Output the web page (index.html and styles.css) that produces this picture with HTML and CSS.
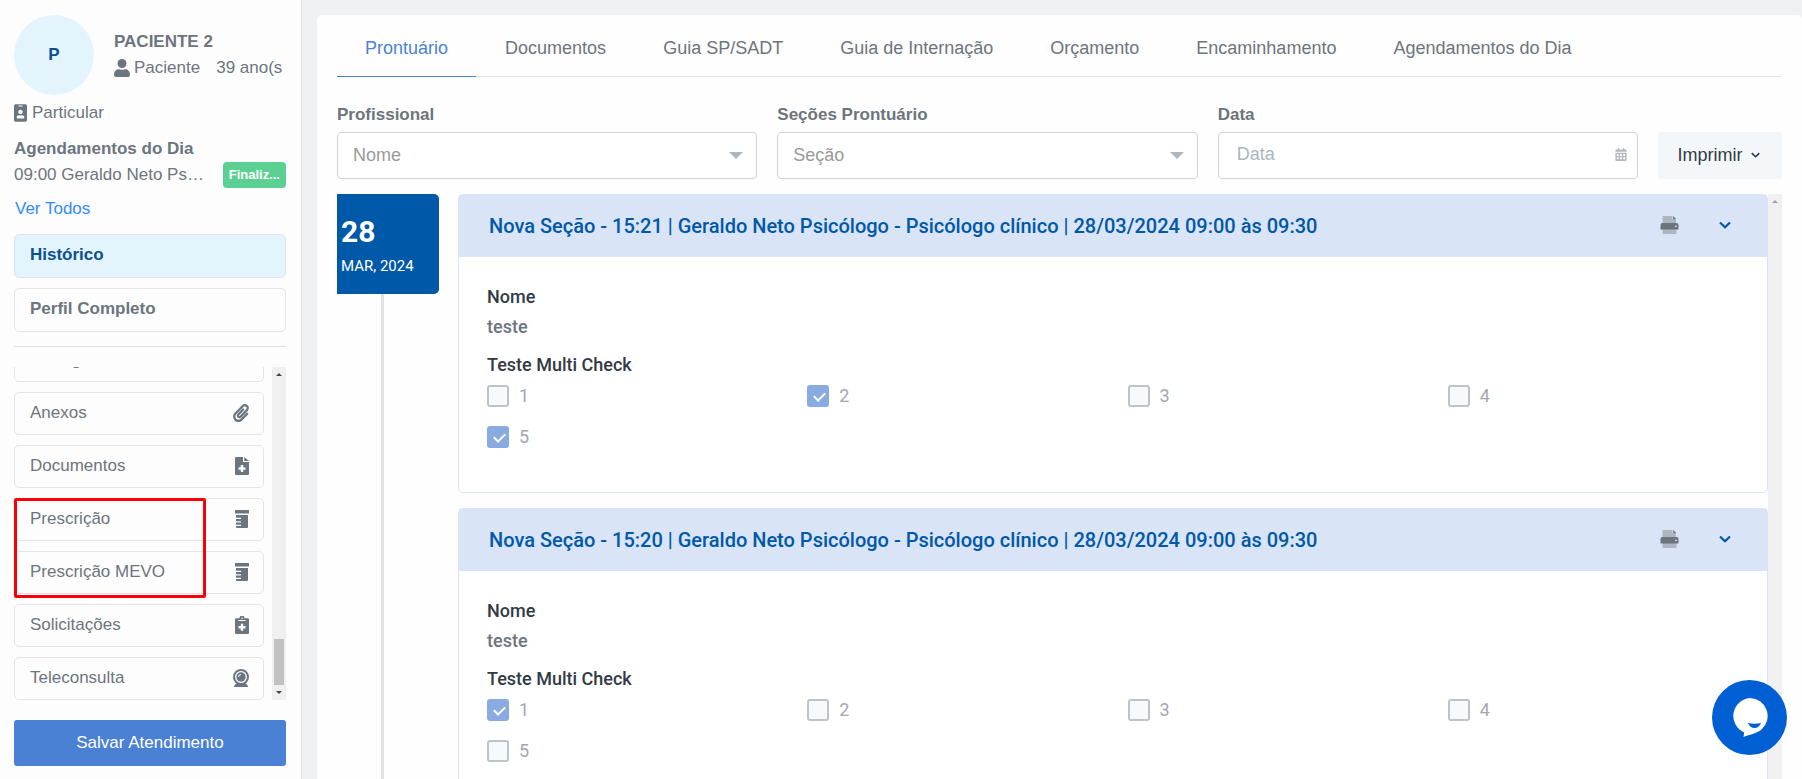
FILE: index.html
```html
<!DOCTYPE html>
<html lang="pt-BR">
<head>
<meta charset="utf-8">
<meta name="viewport" content="width=device-width, initial-scale=1">
<title>Prontuário</title>
<link rel="stylesheet" href="styles.css">
</head>
<body>
<svg class="sprite" aria-hidden="true">
  <symbol id="user" viewBox="0 0 448 512"><circle cx="224" cy="128" r="128"/><path d="M313.600 288h-16.700c-22.200 10.200-46.900 16-72.900 16s-50.600-5.800-72.900-16h-16.700C60.200 288 0 348.200 0 422.400V464c0 26.500 21.500 48 48 48h352c26.500 0 48-21.500 48-48v-41.600c0-74.200-60.200-134.400-134.400-134.400z"/></symbol>
  <symbol id="badge" viewBox="0 0 384 512"><path fill-rule="evenodd" d="M336 0H48C21.500 0 0 21.500 0 48v416c0 26.500 21.500 48 48 48h288c26.500 0 48-21.500 48-48V48c0-26.500-21.500-48-48-48zM144 32h96c8.800 0 16 7.200 16 16s-7.200 16-16 16h-96c-8.800 0-16-7.200-16-16s7.200-16 16-16zm48 128c35.300 0 64 28.700 64 64s-28.700 64-64 64-64-28.700-64-64 28.700-64 64-64zm112 236.800c0 10.600-10 19.200-22.400 19.200H102.400C90 416 80 407.400 80 396.800v-19.200c0-31.800 30.100-57.600 67.200-57.600h5c12.300 5.100 25.700 8 39.800 8s27.600-2.900 39.800-8h5c37.100 0 67.200 25.800 67.200 57.600v19.200z"/></symbol>
  <symbol id="clip" viewBox="0 0 448 512"><path d="M43.246 466.142c-58.430-60.289-57.341-157.511 1.386-217.581L254.392 34c44.316-45.332 116.351-45.336 160.671 0 43.890 44.894 43.943 117.329 0 162.276L232.214 383.128c-29.855 30.537-78.633 30.111-107.982-.998-28.275-29.970-27.368-77.473 1.452-106.953l143.743-146.835c6.182-6.314 16.312-6.422 22.626-.241l22.861 22.379c6.315 6.182 6.422 16.312.241 22.626L171.427 319.927c-4.932 5.045-5.236 13.428-.648 18.292 4.372 4.634 11.245 4.711 15.688.165l182.849-186.851c19.613-20.062 19.613-52.725-.011-72.798-19.189-19.627-49.957-19.637-69.154 0L90.390 293.295c-34.763 35.560-35.299 93.120-1.191 128.313 34.010 35.093 88.985 35.137 123.058.286l172.060-175.999c6.177-6.319 16.307-6.433 22.626-.256l22.877 22.364c6.319 6.177 6.434 16.307.256 22.626l-172.060 175.998c-59.576 60.938-155.943 60.216-214.770-.485z"/></symbol>
  <symbol id="file" viewBox="0 0 14 18"><path fill-rule="evenodd" d="M1 0h7v5h6v12a1 1 0 0 1-1 1H1a1 1 0 0 1-1-1V1a1 1 0 0 1 1-1zM5.800 8v2.300H3.500v2.400h2.300V15h2.400v-2.300h2.300v-2.400H8.200V8zM9.200 0l4.800 4H9.200z"/></symbol>
  <symbol id="bottle" viewBox="0 0 14 18"><path d="M.5 0h13a.5.500 0 0 1 .5.500v2.500a.5.500 0 0 1-.5.500H.5A.5.500 0 0 1 0 3V.5A.5.500 0 0 1 .5 0zM1 5h12v12a1 1 0 0 1-1 1H2a1 1 0 0 1-1-1v-1h5v-1.200H1v-2.300h5v-1.200H1V9h5V7.800H1z"/></symbol>
  <symbol id="clipboard" viewBox="0 0 14 18"><path fill-rule="evenodd" d="M1.300 2.200H4.500a2.500 2.500 0 0 1 5 0h3.200A1.300 1.300 0 0 1 14 3.500v13.200a1.300 1.300 0 0 1-1.300 1.300H1.300A1.300 1.300 0 0 1 0 16.700V3.500a1.300 1.300 0 0 1 1.300-1.300zM7 1.500a.8.800 0 1 0 0 1.600.8.800 0 0 0 0-1.600zM3.500 4v1h7V4zM5.800 7.700V10H3.500v2.400h2.300v2.300h2.400v-2.300h2.300V10H8.200V7.700z"/></symbol>
  <symbol id="webcam" viewBox="0 0 16 18"><circle cx="8" cy="8" r="7" fill="none" stroke="currentColor" stroke-width="2"/><circle cx="8" cy="8" r="4.700"/><path d="M5.500 8A2.500 2.500 0 0 1 8 5.500" fill="none" stroke="#fff"/><path d="M3 14.500h10l2 2.500a.7.700 0 0 1-.5 1h-13a.7.700 0 0 1-.5-1z"/></symbol>
  <symbol id="printer" viewBox="0 0 18 18"><path d="M2 8V1a1 1 0 0 1 1-1h9v3h3.500v5zM2 13h14v4a1 1 0 0 1-1 1H3a1 1 0 0 1-1-1z" fill="#adb5c2"/><path d="M12.700 0 15.700 3h-3z"/><path fill-rule="evenodd" d="M2 7h14a2 2 0 0 1 2 2v4.500H0V9a2 2 0 0 1 2-2zm13.400 2.400a.9.900 0 1 0 0 1.800.9.900 0 0 0 0-1.800z"/></symbol>
  <symbol id="chevron" viewBox="0 0 12 8"><path d="M1 1.500 6 6.300l5-4.800" fill="none" stroke="currentColor" stroke-width="2.200"/></symbol>
  <symbol id="calendar" viewBox="0 0 12 14"><path fill-rule="evenodd" d="M2.500 0h1.500v1.500h4V0h1.500v1.500H11a1 1 0 0 1 1 1V4H0V2.500a1 1 0 0 1 1-1h1.500zM0 5h12v8a1 1 0 0 1-1 1H1a1 1 0 0 1-1-1zm1.500 1.500v2h2v-2zm3.500 0v2h2v-2zm3.500 0v2h2v-2zm-7 3.500v2h2v-2zm3.500 0v2h2v-2zm3.500 0v2h2v-2z"/></symbol>
</svg>

<div class="app">
  <aside class="sidebar">
    <div class="patient">
      <div class="avatar">P</div>
      <div class="patient-info">
        <div class="strong">PACIENTE 2</div>
        <div class="patient-meta"><svg class="icon-user"><use href="#user"/></svg><span>Paciente</span><span class="age">39 ano(s</span></div>
      </div>
    </div>
    <div class="plan"><svg class="icon-badge"><use href="#badge"/></svg>Particular</div>
    <div class="strong">Agendamentos do Dia</div>
    <div class="appointment"><span>09:00 Geraldo Neto Ps…</span><span class="status">Finaliz...</span></div>
    <a class="see-all" href="#">Ver Todos</a>
    <nav class="primary-nav">
      <button class="side-btn active">Histórico</button>
      <button class="side-btn">Perfil Completo</button>
    </nav>
    <div class="actions">
      <div class="action-list">
        <button class="side-btn">Filmagens</button>
        <button class="side-btn">Anexos<svg class="icon-wide"><use href="#clip"/></svg></button>
        <button class="side-btn">Documentos<svg class="icon-narrow"><use href="#file"/></svg></button>
        <div class="highlighted">
          <button class="side-btn">Prescrição<svg class="icon-narrow"><use href="#bottle"/></svg></button>
          <button class="side-btn">Prescrição MEVO<svg class="icon-narrow"><use href="#bottle"/></svg></button>
        </div>
        <button class="side-btn">Solicitações<svg class="icon-narrow"><use href="#clipboard"/></svg></button>
        <button class="side-btn">Teleconsulta<svg class="icon-wide"><use href="#webcam"/></svg></button>
      </div>
      <div class="scrollbar"><i class="arrow-up"></i><i class="thumb"></i><i class="arrow-down"></i></div>
    </div>
    <button class="save">Salvar Atendimento</button>
  </aside>

  <main class="main">
    <nav class="tabs">
      <a class="tab current" href="#">Prontuário</a>
      <a class="tab" href="#">Documentos</a>
      <a class="tab" href="#">Guia SP/SADT</a>
      <a class="tab" href="#">Guia de Internação</a>
      <a class="tab" href="#">Orçamento</a>
      <a class="tab" href="#">Encaminhamento</a>
      <a class="tab" href="#">Agendamentos do Dia</a>
    </nav>
    <form class="filters">
      <div class="field">
        <label for="prof">Profissional</label>
        <div class="control caret"><select id="prof"><option>Nome</option></select></div>
      </div>
      <div class="field">
        <label for="sec">Seções Prontuário</label>
        <div class="control caret"><select id="sec"><option>Seção</option></select></div>
      </div>
      <div class="field">
        <label for="date">Data</label>
        <div class="control"><input id="date" type="text" placeholder="Data"><svg class="icon-calendar"><use href="#calendar"/></svg></div>
      </div>
      <button class="print" type="button">Imprimir<svg class="icon-small-chevron"><use href="#chevron"/></svg></button>
    </form>

    <div class="history">
      <div class="timeline">
        <div class="date"><div class="day">28</div><div class="month">MAR, 2024</div></div>
        <div class="line"></div>
      </div>
      <div class="entries">
        <section class="entry">
          <header class="entry-head">
            <h2>Nova Seção - 15:21 | Geraldo Neto Psicólogo - Psicólogo clínico | 28/03/2024 09:00 às 09:30</h2>
            <button class="icon-btn" aria-label="Imprimir seção"><svg class="icon-printer"><use href="#printer"/></svg></button>
            <button class="icon-btn" aria-label="Recolher seção"><svg class="icon-chevron"><use href="#chevron"/></svg></button>
          </header>
          <div class="entry-body">
            <div class="question">Nome</div>
            <div class="answer">teste</div>
            <div class="question">Teste Multi Check</div>
            <div class="checks">
              <label><input type="checkbox" disabled>1</label>
              <label><input type="checkbox" disabled checked>2</label>
              <label><input type="checkbox" disabled>3</label>
              <label><input type="checkbox" disabled>4</label>
              <label><input type="checkbox" disabled checked>5</label>
            </div>
          </div>
        </section>
        <section class="entry">
          <header class="entry-head">
            <h2>Nova Seção - 15:20 | Geraldo Neto Psicólogo - Psicólogo clínico | 28/03/2024 09:00 às 09:30</h2>
            <button class="icon-btn" aria-label="Imprimir seção"><svg class="icon-printer"><use href="#printer"/></svg></button>
            <button class="icon-btn" aria-label="Recolher seção"><svg class="icon-chevron"><use href="#chevron"/></svg></button>
          </header>
          <div class="entry-body">
            <div class="question">Nome</div>
            <div class="answer">teste</div>
            <div class="question">Teste Multi Check</div>
            <div class="checks">
              <label><input type="checkbox" disabled checked>1</label>
              <label><input type="checkbox" disabled>2</label>
              <label><input type="checkbox" disabled>3</label>
              <label><input type="checkbox" disabled>4</label>
              <label><input type="checkbox" disabled>5</label>
            </div>
          </div>
        </section>
      </div>
      <div class="scrollbar muted"><i class="arrow-up"></i></div>
    </div>
  </main>
</div>

<button class="chat" aria-label="Abrir chat">
  <svg class="icon-chat" viewBox="0 0 36 39"><path fill="#fff" d="M18 0a18 18 0 0 1 11.500 31.500C25.500 35 18 36.500 11.500 39l.7-4.500A18 18 0 0 1 18 0z"/><path fill="#005fd3" d="M16 25q6.500 1.500 13 0-2 5-6.500 5T16 25z"/></svg>
</button>
</body>
</html>
```
FILE: styles.css
```css
* {
  box-sizing: border-box;
}

body {
  margin: 0;
  background: #f0f1f3;
  color: #6c757d;
  font: 18px/26px "Liberation Sans", Arial, sans-serif;
}

button,
input,
select {
  font: inherit;
  color: inherit;
}

button {
  cursor: pointer;
}

a {
  text-decoration: none;
}

svg {
  fill: currentColor;
  flex: none;
}

.sprite {
  position: absolute;
  width: 0;
  height: 0;
}

.app {
  display: flex;
  height: 100vh;
  overflow: hidden;
}

.strong {
  font-weight: bold;
}

/* Sidebar */
.sidebar {
  display: flex;
  flex-direction: column;
  flex: none;
  width: 302px;
  padding: 15px 15px 13px 14px;
  background: #fdfdfe;
  border-right: 1px solid #dee2e6;
  font-size: 17px;
}

.patient {
  display: flex;
  align-items: center;
  gap: 20px;
  margin-bottom: 5px;
}

.avatar {
  display: flex;
  align-items: center;
  justify-content: center;
  flex: none;
  width: 80px;
  height: 80px;
  border-radius: 50%;
  background: #e3f4fc;
  color: #0b4f94;
  font-weight: bold;
}

.patient-meta {
  display: flex;
  align-items: center;
  white-space: nowrap;
}

.icon-user {
  width: 16px;
  height: 18px;
  margin-right: 4px;
}

.age {
  margin-left: 16px;
}

.plan {
  display: flex;
  align-items: center;
  gap: 5px;
  margin-bottom: 10px;
}

.icon-badge {
  width: 13px;
  height: 18px;
}

.appointment {
  display: flex;
  align-items: center;
  justify-content: space-between;
  white-space: nowrap;
}

.status {
  flex: none;
  padding: 0 6px;
  border-radius: 4px;
  background: #5cd093;
  color: #fff;
  font-size: 13px;
  font-weight: bold;
}

.see-all {
  margin: 8px 0 12px 1px;
  color: #338bff;
}

.primary-nav {
  display: grid;
  gap: 10px;
  padding-bottom: 14px;
  border-bottom: 1px solid #dee2e6;
}

.side-btn {
  display: flex;
  align-items: center;
  justify-content: space-between;
  flex: none;
  width: 100%;
  height: 43px;
  padding: 0 14px 2px 15px;
  border: 1px solid #e2e5e8;
  border-radius: 5px;
  background: #fdfdfe;
  text-align: left;
}

.primary-nav .side-btn {
  height: 44px;
  font-weight: bold;
}

.side-btn.active {
  background: #e3f4fc;
  color: #0b4f94;
}

.actions {
  display: flex;
  gap: 8px;
  flex: 1;
  min-height: 0;
  margin: 20px 0;
}

.action-list {
  display: flex;
  flex-direction: column;
  justify-content: flex-end;
  gap: 10px;
  flex: 1;
}

.action-list {
  overflow: hidden;
}

.icon-wide {
  width: 16px;
  height: 18px;
}

.icon-narrow {
  width: 14px;
  height: 18px;
}

.highlighted {
  position: relative;
  display: flex;
  flex-direction: column;
  flex: none;
  gap: 10px;
}

.highlighted::after {
  content: "";
  position: absolute;
  inset: 0 58px -4px 0;
  border: 3px solid #f90006;
  border-radius: 2px;
}

.scrollbar {
  display: flex;
  flex-direction: column;
  align-items: center;
  flex: none;
  width: 14px;
  padding: 6px 0;
  background: #f0f0f0;
  color: #444;
}

.scrollbar.muted {
  color: #a3a3a3;
}

.arrow-up,
.arrow-down {
  border: 3px solid transparent;
}

.arrow-up {
  border-top: 0;
  border-bottom-color: currentColor;
}

.arrow-down {
  border-bottom: 0;
  border-top-color: currentColor;
}

.thumb {
  width: 10px;
  height: 46px;
  margin: auto 0 6px;
  background: #c1c1c1;
}

.save {
  flex: none;
  height: 46px;
  border: 0;
  border-radius: 3px;
  background: #4a81d4;
  color: #fff;
}

/* Main panel */
.main {
  display: flex;
  flex-direction: column;
  flex: 1;
  min-width: 0;
  margin: 15px 0 0 15px;
  padding: 0 20px;
  border-radius: 5px 5px 0 0;
  background: #fefefe;
}

.tabs {
  display: flex;
  flex: none;
  gap: 1px;
  border-bottom: 1px solid #dee2e6;
}

.tab {
  margin-bottom: -1px;
  padding: 20px 28px 15px;
  border-bottom: 1px solid transparent;
  color: #6c757d;
  white-space: nowrap;
}

.tab.current {
  border-color: #4a81d4;
  color: #4a81d4;
}

.filters {
  display: flex;
  align-items: flex-end;
  gap: 20px;
  margin: 25px 0 15px;
}

.field {
  flex: 1;
}

.field label {
  display: block;
  margin-bottom: 4px;
  font-size: 17px;
  font-weight: bold;
}

.control {
  position: relative;
}

.control select,
.control input {
  display: block;
  width: 100%;
  height: 47px;
  padding: 0 15px 2px;
  border: 1px solid #ced4da;
  border-radius: 4px;
  background: #fff;
  color: #999;
  appearance: none;
}

.control input {
  padding: 0 18px 2px;
}

.control input::placeholder {
  color: #adb5bd;
}

.caret::after {
  content: "";
  position: absolute;
  top: 20px;
  right: 14px;
  border: 7px solid transparent;
  border-top-color: #adb5bd;
  border-bottom: 0;
  pointer-events: none;
}

.icon-calendar {
  position: absolute;
  top: 16px;
  right: 11px;
  width: 12px;
  height: 13px;
  color: #b5b9bd;
}

.print {
  display: flex;
  align-items: center;
  justify-content: center;
  gap: 9px;
  width: 124px;
  height: 47px;
  padding: 0 2px 2px 0;
  border: 0;
  border-radius: 3px;
  background: #f3f7fa;
  color: #323a46;
}

.icon-small-chevron {
  width: 9px;
  height: 6px;
}

.history {
  display: flex;
  flex: 1;
  min-height: 0;
  overflow: hidden;
  font-family: Roboto, sans-serif;
}

.timeline {
  display: flex;
  flex-direction: column;
  flex: none;
  width: 102px;
  margin-right: 19px;
}

.date {
  height: 100px;
  padding: 21px 4px 0;
  border-radius: 0 5px 5px 0;
  background: #0058a8;
  color: #fff;
}

.day {
  font-size: 30px;
  font-weight: bold;
  line-height: 34px;
}

.month {
  font-size: 15px;
  line-height: 34px;
}

.line {
  flex: 1;
  width: 3px;
  margin-left: 44px;
  background: #dee2e6;
}

.entries {
  flex: 1;
  min-width: 0;
}

.entry {
  margin-bottom: 15px;
  border: 1px solid #d8e4f6;
  border-radius: 5px;
  background: #fff;
}

.entry-head {
  display: flex;
  align-items: center;
  height: 62px;
  padding: 0 26px 0 30px;
  background: #d9e4f6;
}

.entry-head h2 {
  flex: 1;
  margin: 0;
  color: #0058a8;
  font-size: 20px;
  font-weight: 500;
}

.icon-btn {
  display: flex;
  align-items: center;
  justify-content: center;
  width: 32px;
  height: 32px;
  margin-left: 24px;
  padding: 0 0 2px;
  border: 0;
  background: none;
}

.icon-printer {
  width: 19px;
  height: 18px;
  color: #6c757d;
}

.icon-chevron {
  width: 12px;
  height: 8px;
  color: #0058a8;
}

.entry-body {
  padding: 27px 0 44px 28px;
}

.question {
  color: #323a46;
  font-weight: 500;
}

.answer {
  margin: 4px 0 12px;
  font-weight: 500;
}

.checks {
  display: grid;
  grid-template-columns: repeat(4, 1fr);
  gap: 19px 1px;
  margin-top: 7px;
  color: #a3a8ae;
}

.checks label {
  display: flex;
  gap: 10px;
  line-height: 21px;
}

.checks input {
  position: relative;
  width: 22px;
  height: 22px;
  margin: 0;
  border: 2px solid #bcc4ca;
  border-radius: 3px;
  background: #f7fafc;
  appearance: none;
}

.checks input:checked {
  border-color: #8aabe2;
  background: #8aabe2;
}

.checks input:checked::after {
  content: "";
  position: absolute;
  top: 3px;
  left: 7px;
  width: 5px;
  height: 9px;
  border: solid #fff;
  border-width: 0 2px 2px 0;
  transform: rotate(45deg);
}

.chat {
  position: fixed;
  right: 15px;
  bottom: 24px;
  display: flex;
  align-items: center;
  justify-content: center;
  width: 75px;
  height: 75px;
  padding: 0;
  border: 0;
  border-radius: 50%;
  background: #005fd3;
}

.icon-chat {
  width: 36px;
  height: 39px;
}
```
